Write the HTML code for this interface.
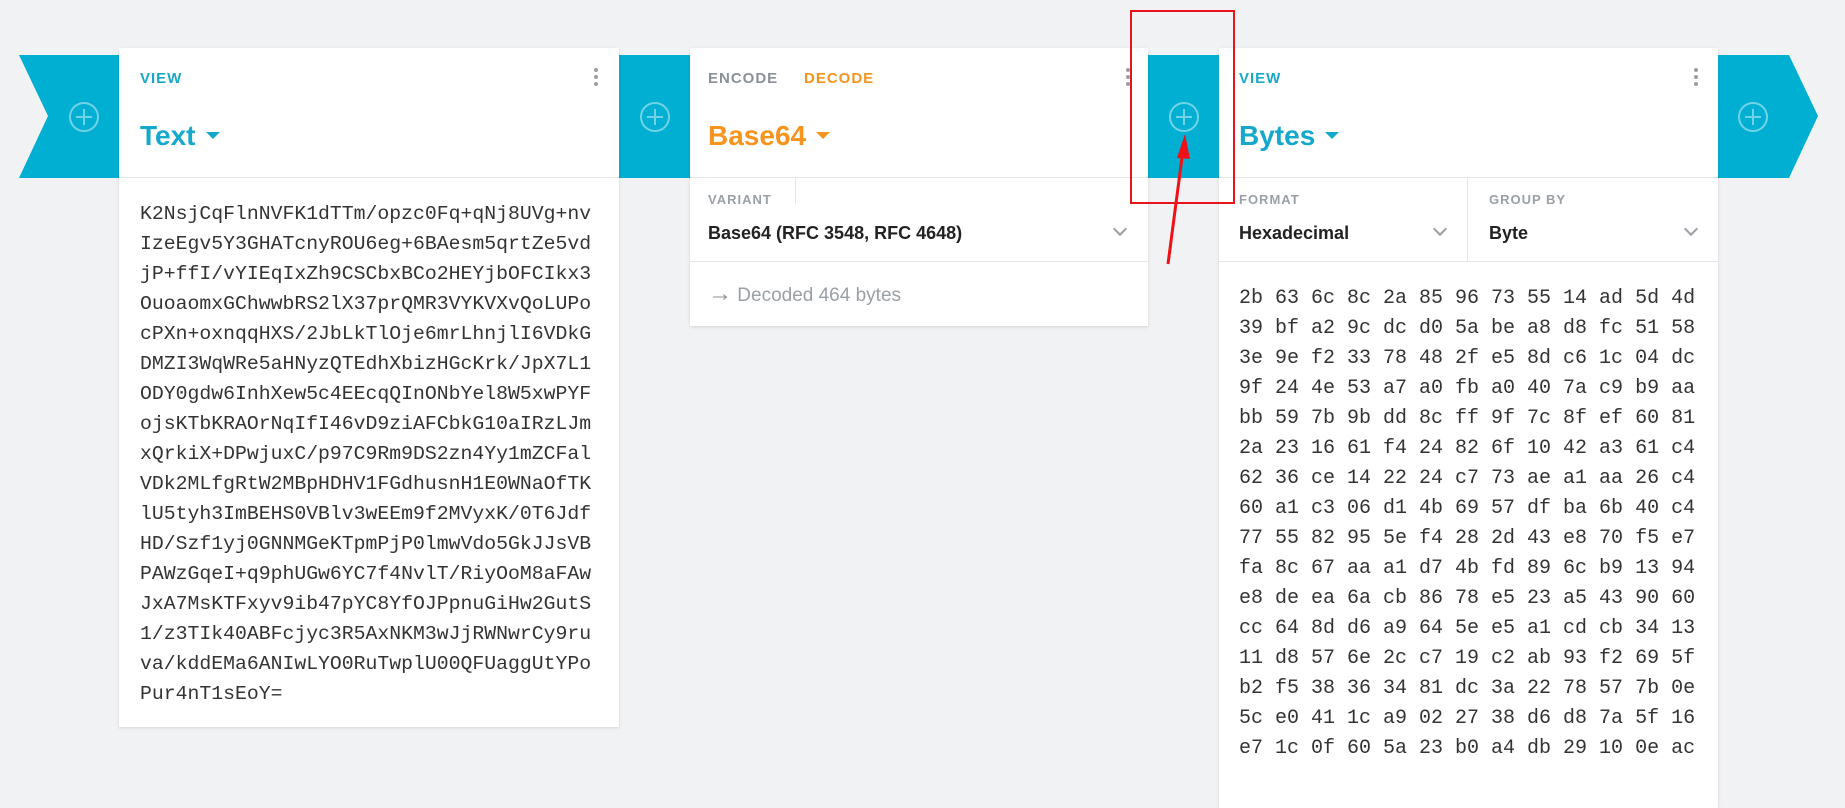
<!DOCTYPE html>
<html><head><meta charset="utf-8"><style>
*{margin:0;padding:0;box-sizing:border-box}
body{width:1845px;height:758px;background:#f1f2f4;position:relative;overflow:hidden;font-family:"Liberation Sans",sans-serif}
.abs{position:absolute}
.card{position:absolute;background:#fff;box-shadow:0 1px 3px rgba(0,0,0,.12)}
.lbl{position:absolute;font-size:15px;font-weight:bold;letter-spacing:1px;color:#1aa8c8}
.title{position:absolute;font-size:28px;font-weight:bold;color:#14a9cc}
.caret{display:inline-block;width:0;height:0;border-left:7px solid transparent;border-right:7px solid transparent;border-top:7px solid currentColor;vertical-align:middle;margin-left:10px;margin-top:-4px}
.hr{position:absolute;left:0;right:0;height:1px;background:#e3e5e8}
.kebab{position:absolute;width:4px}
.kebab i{display:block;width:4px;height:4px;border-radius:2px;background:#9a9ea3;margin-bottom:3px}
.mono{position:absolute;font-family:"Liberation Mono",monospace;font-size:20px;line-height:30px;color:#333;white-space:pre}
.small{position:absolute;font-size:13px;font-weight:bold;letter-spacing:1px;color:#9aa0a6}
.val{position:absolute;font-size:18px;font-weight:bold;color:#222}
.chev{position:absolute;width:10px;height:10px;border-right:2px solid #9aa0a6;border-bottom:2px solid #9aa0a6;transform:rotate(45deg)}
</style></head><body>
<svg class="abs" style="left:0;top:0" width="1845" height="758">
<polygon points="19,55 119,55 119,178 19,178 48,116" fill="#00afd1"/>
<rect x="619" y="55" width="71" height="123" fill="#00afd1"/>
<rect x="1148" y="55" width="71" height="123" fill="#00afd1"/>
<polygon points="1718,55 1789,55 1818,116 1789,178 1718,178" fill="#00afd1"/>
<g fill="none" stroke="rgba(255,255,255,.45)" stroke-width="2">
<circle cx="84" cy="117" r="14"/><path d="M84 109v16M76 117h16"/>
<circle cx="655" cy="117" r="14"/><path d="M655 109v16M647 117h16"/>
<circle cx="1184" cy="117" r="14"/><path d="M1184 109v16M1176 117h16"/>
<circle cx="1753" cy="117" r="14"/><path d="M1753 109v16M1745 117h16"/>
</g>
</svg>

<div class="card" style="left:119px;top:48px;width:500px;height:679px">
 <div class="lbl" style="left:21px;top:22px">VIEW</div>
 <div class="kebab" style="left:475px;top:20px"><i></i><i></i><i></i></div>
 <div class="title" style="left:21px;top:72px">Text<span class="caret"></span></div>
 <div class="hr" style="top:129px"></div>
 <div class="mono" style="left:21px;top:151px;font-size:19.8px">K2NsjCqFlnNVFK1dTTm/opzc0Fq+qNj8UVg+nv
IzeEgv5Y3GHATcnyROU6eg+6BAesm5qrtZe5vd
jP+ffI/vYIEqIxZh9CSCbxBCo2HEYjbOFCIkx3
OuoaomxGChwwbRS2lX37prQMR3VYKVXvQoLUPo
cPXn+oxnqqHXS/2JbLkTlOje6mrLhnjlI6VDkG
DMZI3WqWRe5aHNyzQTEdhXbizHGcKrk/JpX7L1
ODY0gdw6InhXew5c4EEcqQInONbYel8W5xwPYF
ojsKTbKRAOrNqIfI46vD9ziAFCbkG10aIRzLJm
xQrkiX+DPwjuxC/p97C9Rm9DS2zn4Yy1mZCFal
VDk2MLfgRtW2MBpHDHV1FGdhusnH1E0WNaOfTK
lU5tyh3ImBEHS0VBlv3wEEm9f2MVyxK/0T6Jdf
HD/Szf1yj0GNNMGeKTpmPjP0lmwVdo5GkJJsVB
PAWzGqeI+q9phUGw6YC7f4NvlT/RiyOoM8aFAw
JxA7MsKTFxyv9ib47pYC8YfOJPpnuGiHw2GutS
1/z3TIk40ABFcjyc3R5AxNKM3wJjRWNwrCy9ru
va/kddEMa6ANIwLYO0RuTwplU00QFUaggUtYPo
Pur4nT1sEoY=</div>
</div>

<div class="card" style="left:690px;top:48px;width:458px;height:278px">
 <div class="lbl" style="left:18px;top:22px;color:#8a9097">ENCODE</div>
 <div class="lbl" style="left:114px;top:22px;color:#f7941d">DECODE</div>
 <div class="kebab" style="left:436px;top:20px"><i></i><i></i><i></i></div>
 <div class="title" style="left:18px;top:72px;color:#f7941d">Base64<span class="caret"></span></div>
 <div class="hr" style="top:129px"></div>
 <div class="abs" style="left:105px;top:129px;width:1px;height:27px;background:#e3e5e8"></div>
 <div class="small" style="left:18px;top:144px">VARIANT</div>
 <div class="val" style="left:18px;top:175px">Base64 (RFC 3548, RFC 4648)</div>
 <div class="chev" style="left:425px;top:176px"></div>
 <div class="hr" style="top:213px"></div>
 <div class="abs" style="left:18px;top:236px;font-size:19px;color:#9aa0a6"><span style="font-size:24px;line-height:19px;color:#8a9097">→</span> Decoded 464 bytes</div>
</div>

<div class="card" style="left:1219px;top:48px;width:499px;height:760px">
 <div class="lbl" style="left:20px;top:22px">VIEW</div>
 <div class="kebab" style="left:475px;top:20px"><i></i><i></i><i></i></div>
 <div class="title" style="left:20px;top:72px">Bytes<span class="caret"></span></div>
 <div class="hr" style="top:129px"></div>
 <div class="abs" style="left:248px;top:129px;width:1px;height:85px;background:#e3e5e8"></div>
 <div class="small" style="left:20px;top:144px">FORMAT</div>
 <div class="small" style="left:270px;top:144px">GROUP BY</div>
 <div class="val" style="left:20px;top:175px">Hexadecimal</div>
 <div class="val" style="left:270px;top:175px">Byte</div>
 <div class="chev" style="left:216px;top:176px"></div>
 <div class="chev" style="left:467px;top:176px"></div>
 <div class="hr" style="top:213px"></div>
 <div class="mono" style="left:20px;top:236px">2b 63 6c 8c 2a 85 96 73 55 14 ad 5d 4d
39 bf a2 9c dc d0 5a be a8 d8 fc 51 58
3e 9e f2 33 78 48 2f e5 8d c6 1c 04 dc
9f 24 4e 53 a7 a0 fb a0 40 7a c9 b9 aa
bb 59 7b 9b dd 8c ff 9f 7c 8f ef 60 81
2a 23 16 61 f4 24 82 6f 10 42 a3 61 c4
62 36 ce 14 22 24 c7 73 ae a1 aa 26 c4
60 a1 c3 06 d1 4b 69 57 df ba 6b 40 c4
77 55 82 95 5e f4 28 2d 43 e8 70 f5 e7
fa 8c 67 aa a1 d7 4b fd 89 6c b9 13 94
e8 de ea 6a cb 86 78 e5 23 a5 43 90 60
cc 64 8d d6 a9 64 5e e5 a1 cd cb 34 13
11 d8 57 6e 2c c7 19 c2 ab 93 f2 69 5f
b2 f5 38 36 34 81 dc 3a 22 78 57 7b 0e
5c e0 41 1c a9 02 27 38 d6 d8 7a 5f 16
e7 1c 0f 60 5a 23 b0 a4 db 29 10 0e ac</div>
</div>

<svg class="abs" style="left:0;top:0" width="1845" height="758">
<rect x="1131" y="11" width="103" height="192" fill="none" stroke="#e8141b" stroke-width="2"/>
<line x1="1168" y1="264" x2="1183" y2="150" stroke="#f01018" stroke-width="3"/>
<polygon points="1185,134 1177,158 1190,159" fill="#f01018"/>
</svg>
</body></html>
